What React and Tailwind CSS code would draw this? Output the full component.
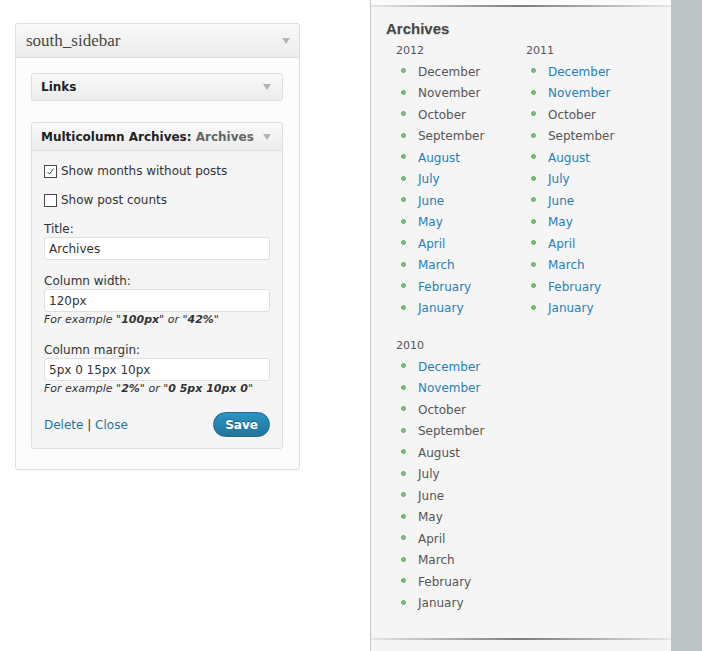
import React from 'react';

const font = { fontFamily: '"DejaVu Sans", Verdana, sans-serif' };

const Arrow = ({ className = '' }) => (
    <svg width="8" height="6" viewBox="0 0 8 6" className={className}>
        <polygon points="0,0 8,0 4,6" fill="#b4b4b4" />
    </svg>
);

const archives = [
    { year: 2012, gray: ['December', 'November', 'October', 'September'] },
    { year: 2011, gray: ['October', 'September'] },
    { year: 2010, gray: ['October', 'September', 'August', 'July', 'June', 'May', 'April', 'March', 'February', 'January'] },
];

const months = ['December', 'November', 'October', 'September', 'August', 'July', 'June', 'May', 'April', 'March', 'February', 'January'];

const Field = ({ label, value, hint, className = '' }) => (
    <div className={className}>
        <div className="leading-[16px] text-[#333]">{label}</div>
        <div className="h-[23px] bg-white border border-[#dfdfdf] rounded-[3px] pl-[4px] flex items-center text-[#333]">
            {value}
        </div>
        {hint && <div className="text-[11px] italic leading-[14px] text-[#333] mt-[1px]">{hint}</div>}
    </div>
);

const Checkbox = ({ checked, label, className = '' }) => (
    <div className={`flex items-center h-[20px] ${className}`}>
        <div className="w-[13px] h-[13px] border border-[#4a4a4a] bg-white flex items-center justify-center">
            {checked && (
                <svg width="9" height="9" viewBox="0 0 9 9">
                    <path d="M1.5 5 L3.5 7 L7.5 1.5" stroke="#444" strokeWidth="1" fill="none" />
                </svg>
            )}
        </div>
        <span className="ml-[4px] text-[#333]">{label}</span>
    </div>
);

export default function App() {
    return (
        <div className="w-[702px] h-[651px] flex bg-white text-[12px]" style={font}>
            {/* Widget admin side */}
            <div className="w-[370px] shrink-0">
                <div className="ml-[15px] mt-[23px] w-[285px] h-[447px] border border-[#dfdfdf] rounded-[3px] bg-[#fcfcfc] shadow-[0_1px_1px_rgba(0,0,0,0.04)] flex flex-col">
                    <div className="h-[34px] shrink-0 flex items-center justify-between pl-[10px] pr-[9px] border-b border-[#dfdfdf] bg-linear-to-b from-[#f9f9f9] to-[#ececec] rounded-t-[3px]">
                        <span className="text-[17px] text-[#464646]" style={{ fontFamily: '"Liberation Serif", serif' }}>south_sidebar</span>
                        <Arrow />
                    </div>

                    <div className="pt-[15px] px-[15px] pr-[16px]">
                        {/* Links widget */}
                        <div className="h-[28px] border border-[#dfdfdf] rounded-[3px] bg-linear-to-b from-[#f9f9f9] to-[#ececec] flex items-center justify-between pl-[9px] pr-[11px]">
                            <span className="font-bold text-[#222]">Links</span>
                            <Arrow />
                        </div>

                        {/* Multicolumn Archives widget */}
                        <div className="mt-[21px] h-[327px] border border-[#dfdfdf] rounded-[3px] bg-[#f5f5f5] flex flex-col">
                            <div className="h-[28px] shrink-0 border-b border-[#dfdfdf] bg-linear-to-b from-[#f9f9f9] to-[#ececec] rounded-t-[3px] flex items-center justify-between pl-[9px] pr-[11px]">
                                <span className="font-bold text-[#222]">
                                    Multicolumn Archives: <span className="text-[#666]">Archives</span>
                                </span>
                                <Arrow />
                            </div>
                            <div className="pl-[12px] pr-[12px] pt-[10px]">
                                <Checkbox checked label="Show months without posts" />
                                <Checkbox label="Show post counts" className="mt-[9px]" />
                                <Field label="Title:" value="Archives" className="mt-[11px]" />
                                <Field
                                    label="Column width:"
                                    value="120px"
                                    className="mt-[13px]"
                                    hint={<>For example "<b>100px</b>" or "<b>42%</b>"</>}
                                />
                                <Field
                                    label="Column margin:"
                                    value="5px 0 15px 10px"
                                    className="mt-[15px]"
                                    hint={<>For example "<b>2%</b>" or "<b>0 5px 10px 0</b>"</>}
                                />
                                <div className="mt-[16px] flex items-center justify-between">
                                    <div className="text-[#21759b]">
                                        Delete <span className="text-[#333]">|</span> Close
                                    </div>
                                    <button className="w-[57px] h-[25px] rounded-full border border-[#1e6a8d] bg-linear-to-b from-[#2a95c5] to-[#21759b] text-white font-bold text-[12px] [text-shadow:0_-1px_0_rgba(0,0,0,0.3)]">
                                        Save
                                    </button>
                                </div>
                            </div>
                        </div>
                    </div>
                </div>
            </div>

            {/* Front-end sidebar */}
            <div className="w-[301px] shrink-0 border-l border-[#c6c6c6] bg-[#f5f5f5] flex flex-col">
                <div className="h-[5px] bg-[#fbfbfb]" />
                <div className="h-[2px] bg-linear-to-r from-[#e6e6e6] via-[#7d7d7d] to-[#e6e6e6]" />
                <div className="flex-1 pl-[15px]">
                    <h2 className="mt-[12px] text-[15px] leading-[20px] font-bold text-[#464646] [text-shadow:0_1px_1px_rgba(0,0,0,0.15)]" style={{ fontFamily: '"Liberation Sans", Arial, sans-serif' }}>
                        Archives
                    </h2>
                    <div className="flex flex-wrap">
                        {archives.map(col => (
                            <div key={col.year} className="w-[120px] ml-[10px] mt-[5px] mb-[15px]">
                                <div className="text-[11px] leading-[14px] text-[#555]">{col.year}</div>
                                <ul className="mt-[3px]">
                                    {months.map(m => (
                                        <li key={m} className="h-[21.5px] flex items-center">
                                            <span className="ml-[5px] w-[5px] h-[5px] rounded-full bg-[#7cbf7c] border border-[#69a969] -mt-[2px]" />
                                            <span className={`ml-[12px] ${col.gray.includes(m) ? 'text-[#555]' : 'text-[#2681b8]'}`}>{m}</span>
                                        </li>
                                    ))}
                                </ul>
                            </div>
                        ))}
                    </div>
                </div>
                <div className="h-[2px] bg-linear-to-r from-[#e6e6e6] via-[#7d7d7d] to-[#e6e6e6]" />
                <div className="h-[11px]" />
            </div>

            <div className="flex-1 bg-[#bec3c5]" />
        </div>
    );
}
